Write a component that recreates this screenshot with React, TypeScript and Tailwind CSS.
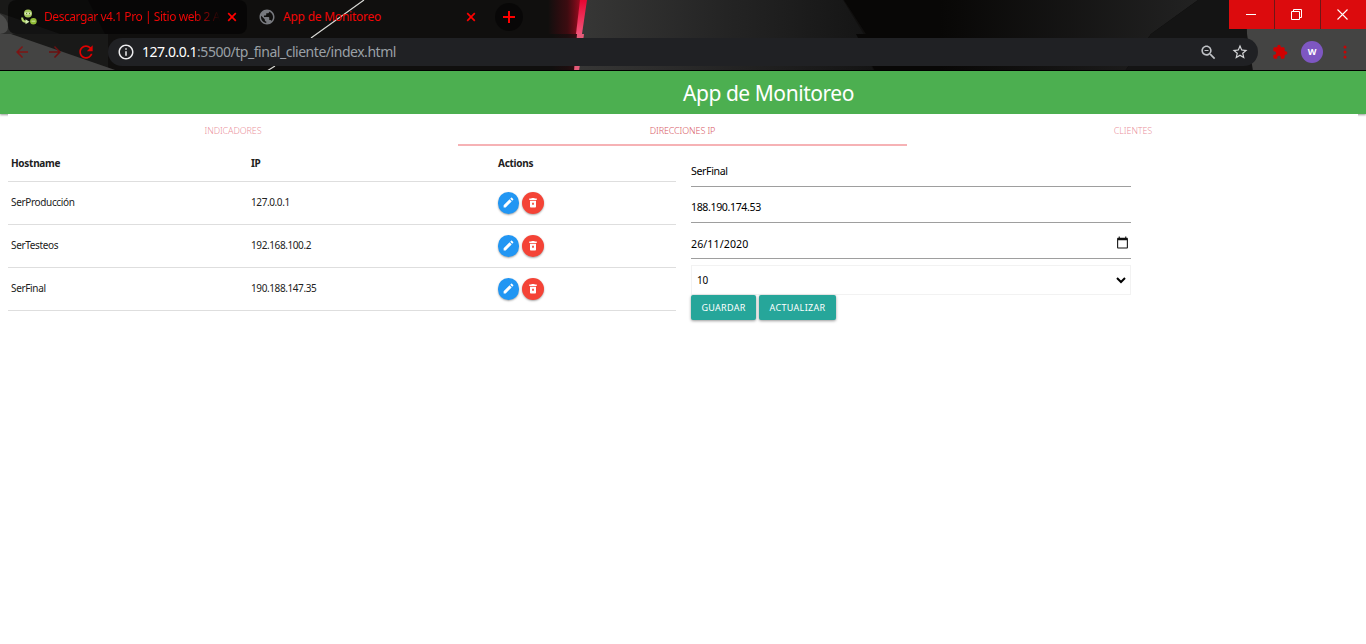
import type { ReactNode } from "react";

const servers = [
  { host: "SerProducción", ip: "127.0.0.1" },
  { host: "SerTesteos", ip: "192.168.100.2" },
  { host: "SerFinal", ip: "190.188.147.35" },
];

function Wallpaper() {
  return (
    <svg className="absolute inset-0 h-full w-full" viewBox="0 0 1366 71" preserveAspectRatio="none" aria-hidden="true">
      <defs>
        <linearGradient id="gray" x1="0" x2="1">
          <stop offset="0" stopColor="#373736" />
          <stop offset="0.5" stopColor="#242424" />
          <stop offset="1" stopColor="#141414" />
        </linearGradient>
        <linearGradient id="glow" x1="0" x2="1">
          <stop offset="0" stopColor="#990014" stopOpacity="0" />
          <stop offset="0.6" stopColor="#8c0716" stopOpacity="0.35" />
          <stop offset="1" stopColor="#b30b22" stopOpacity="0.85" />
        </linearGradient>
        <linearGradient id="beam" x1="0" x2="0" y1="0" y2="1">
          <stop offset="0" stopColor="#e80632" />
          <stop offset="1" stopColor="#f2557a" />
        </linearGradient>
        <linearGradient id="facet" x1="0" x2="1">
          <stop offset="0" stopColor="#080706" />
          <stop offset="1" stopColor="#222222" />
        </linearGradient>
      </defs>
      <rect width="1366" height="71" fill="#100f0e" />
      <path d="M0 0H88L105 34H108V71H0Z" fill="#191918" />
      <path d="M0 13L60 34H0Z" fill="#2c2c2b" />
      <path d="M0 34H11L118 71H0Z" fill="#444443" />
      <path d="M0 14Q8 18 8 27Q8 33 0 34Z" fill="#4b4b4a" />
      <path d="M364 0L311 38M275 66L267 71" stroke="#d8d8d4" strokeWidth="1.2" />
      <rect x="548" width="32" height="34" fill="url(#glow)" />
      <rect x="552" y="34" width="26" height="37" fill="url(#glow)" opacity="0.3" />
      <path d="M584 0H843L866 38H856L874 71H578Z" fill="url(#gray)" />
      <path d="M580 0H587L582 34H576Z" fill="url(#beam)" />
      <path d="M577 34H584L579 71H574Z" fill="#e45b79" />
      <path d="M844 0H1198L1125 71H875L856 34H866Z" fill="#080706" />
      <path d="M940 0H1198L1151 34L1125 71H940Z" fill="url(#facet)" />
      <path d="M1198 0H1247L1254 71H1125L1151 34Z" fill="#141414" />
      <path d="M1246 0H1366V71H1253L1247 34Z" fill="#444443" />
      <rect y="70" width="1366" height="1" fill="#000000" />
    </svg>
  );
}

function CloseMark() {
  return (
    <svg width="10" height="10" viewBox="0 0 10 10" className="shrink-0" aria-hidden="true">
      <path d="M1.2 1.2L8.8 8.8M8.8 1.2L1.2 8.8" stroke="#ff0000" strokeWidth="1.7" />
    </svg>
  );
}

function Favicon() {
  return (
    <svg width="16" height="16" viewBox="0 0 16 16" className="shrink-0" aria-hidden="true">
      <circle cx="7" cy="4.5" r="4" fill="#a5c95c" />
      <path d="M3.800 3.500H10.200V5.500H3.800Z" fill="#e4efcf" />
      <circle cx="5.6" cy="4.5" r="0.7" fill="#5f7d2b" />
      <circle cx="8.5" cy="4.5" r="0.7" fill="#5f7d2b" />
      <path d="M1.200 8.500Q1 12.500 5 12.800" stroke="#b7da6c" strokeWidth="2" fill="none" />
      <path d="M4.500 10.200L8.500 12.800L4.500 15.200Z" fill="#d2ecad" />
      <circle cx="12.4" cy="12.3" r="3.3" fill="#90bb36" />
      <path d="M10.500 11.600H14.300V12.800H10.500Z" fill="#c5df91" />
    </svg>
  );
}

function Material({ path, size, color, className }: { path: string; size: number; color: string; className?: string }) {
  return (
    <svg width={size} height={size} viewBox="0 0 24 24" fill={color} className={`shrink-0 ${className ?? ""}`} aria-hidden="true">
      <path d={path} fillRule="evenodd" />
    </svg>
  );
}

const paths = {
  globe:
    "M12 2C6.48 2 2 6.48 2 12s4.48 10 10 10 10-4.48 10-10S17.52 2 12 2zm-1 17.93c-3.95-.49-7-3.85-7-7.93 0-.62.08-1.21.21-1.79L9 15v1c0 1.1.9 2 2 2v1.93zm6.900-2.540c-.26-.81-1-1.390-1.900-1.390h-1v-3c0-.55-.45-1-1-1H8v-2h2c.55 0 1-.45 1-1V7h2c1.100 0 2-.9 2-2v-.41c2.930 1.190 5 4.060 5 7.410 0 2.080-.8 3.970-2.100 5.390z",
  back: "M20 11H7.830l5.590-5.590L12 4l-8 8 8 8 1.410-1.410L7.830 13H20v-2z",
  forward: "M12 4l-1.410 1.410L16.170 11H4v2h12.170l-5.580 5.590L12 20l8-8z",
  reload:
    "M17.650 6.350C16.200 4.900 14.210 4 12 4c-4.420 0-7.990 3.580-7.990 8s3.570 8 7.990 8c3.730 0 6.840-2.550 7.730-6h-2.080c-.82 2.330-3.040 4-5.650 4-3.310 0-6-2.690-6-6s2.690-6 6-6c1.660 0 3.140.69 4.220 1.780L13 11h7V4l-2.350 2.350z",
  info: "M11 7h2v2h-2zm0 4h2v6h-2zm1-9C6.480 2 2 6.480 2 12s4.480 10 10 10 10-4.480 10-10S17.520 2 12 2zm0 18c-4.410 0-8-3.590-8-8s3.590-8 8-8 8 3.590 8 8-3.590 8-8 8z",
  zoomOut:
    "M15.500 14h-.79l-.28-.27C15.410 12.590 16 11.110 16 9.500 16 5.910 13.090 3 9.500 3S3 5.910 3 9.500 5.910 16 9.500 16c1.610 0 3.090-.59 4.230-1.570l.27.28v.79l5 4.990L20.490 19l-4.990-5zm-6 0C7.010 14 5 11.990 5 9.500S7.010 5 9.500 5 14 7.010 14 9.500 11.990 14 9.500 14zM7 8.800h5v1.400H7z",
  star: "M22 9.240l-7.190-.62L12 2 9.190 8.630 2 9.240l5.460 4.730L5.820 21 12 17.270 18.180 21l-1.630-7.030L22 9.240zM12 15.400l-3.760 2.270 1-4.280-3.320-2.880 4.380-.38L12 6.100l1.710 4.040 4.380.38-3.320 2.880 1 4.280L12 15.400z",
  puzzle:
    "M20.500 11H19V7c0-1.100-.9-2-2-2h-4V3.500C13 2.120 11.880 1 10.500 1S8 2.120 8 3.500V5H4c-1.100 0-1.990.9-1.990 2v3.800H3.500c1.490 0 2.700 1.210 2.700 2.700s-1.210 2.700-2.700 2.700H2V20c0 1.100.9 2 2 2h3.800v-1.500c0-1.490 1.210-2.700 2.700-2.700s2.700 1.210 2.700 2.700V22H17c1.100 0 2-.9 2-2v-4h1.500c1.380 0 2.500-1.120 2.500-2.500S21.880 11 20.500 11z",
  edit: "M3 17.250V21h3.750L17.810 9.940l-3.750-3.750L3 17.250zM20.710 7.040c.39-.39.39-1.020 0-1.410l-2.340-2.340c-.39-.39-1.020-.39-1.410 0l-1.830 1.830 3.750 3.750 1.830-1.830z",
  trash:
    "M6 19c0 1.100.9 2 2 2h8c1.100 0 2-.9 2-2V7.500H6V19zM15.500 3l-1-1h-5l-1 1H4.500v3h15V3zM10.300 11.500h3.400v4h-3.400z",
  calendar: "M20 3h-1V1h-2v2H7V1H5v2H4c-1.100 0-2 .9-2 2v16c0 1.100.9 2 2 2h16c1.100 0 2-.9 2-2V5c0-1.100-.9-2-2-2zm0 18H4V8h16v13z",
};

function BrowserChrome() {
  return (
    <header className="relative h-[71px] overflow-hidden bg-black">
      <Wallpaper />
      <div className="relative flex h-[34px] items-start text-[12px] text-[#f00606]">
        <div className="ml-2 flex h-[34px] w-[239px] items-center rounded-lg bg-black/55 pl-[13px]">
          <Favicon />
          <span className="ml-[7px] w-[180px] shrink-0 whitespace-nowrap bg-linear-to-r from-[#f00606] from-83% to-[#f0060600] to-98% bg-clip-text tracking-[-0.440px] text-transparent">
            Descargar v4.1 Pro | Sitio web 2 A
          </span>
          <span className="ml-[3px] flex"><CloseMark /></span>
        </div>
        <div className="flex h-[34px] w-[248px] items-center pl-[11px]">
          <Material path={paths.globe} size={18} color="#77797e" />
          <span className="ml-[7px] w-[183px] whitespace-nowrap tracking-[-0.230px]">App de Monitoreo</span>
          <CloseMark />
        </div>
        <div className="mt-[3px] flex size-7 items-center justify-center rounded-full bg-black/50">
          <svg width="12" height="12" viewBox="0 0 12 12" aria-hidden="true">
            <path d="M6 0V12M0 6H12" stroke="#ff0000" strokeWidth="2" />
          </svg>
        </div>
        <div className="ml-auto flex h-[29px] gap-px bg-[#6e1717]">
          <div className="flex w-[45px] items-center justify-center bg-[#dc0b0d] pr-[2px]"><span className="h-px w-[10px] bg-white" /></div>
          <div className="flex w-[45px] items-center justify-center bg-[#dc0b0d] pr-[2px] pb-px">
            <svg width="11" height="11" viewBox="0 0 11 11" fill="none" stroke="#fff" aria-hidden="true">
              <path d="M.5 2.500h8v8h-8zM2.500 2.500v-2h8v8h-2" />
            </svg>
          </div>
          <div className="flex w-[45px] items-center justify-center bg-[#dc0b0d] pr-[2px] pb-px">
            <svg width="11" height="11" viewBox="0 0 11 11" aria-hidden="true">
              <path d="M.5.5l10 10M10.500.5l-10 10" stroke="#fff" strokeWidth="1.100" />
            </svg>
          </div>
        </div>
      </div>
      <div className="relative flex h-[36px] items-center">
        <Material path={paths.back} size={18} color="#7d1414" className="ml-[13px]" />
        <Material path={paths.forward} size={18} color="#6b1010" className="ml-[15px]" />
        <Material path={paths.reload} size={20} color="#e00000" className="ml-[12px]" />
        <div className="ml-[12px] flex h-7 w-[1150px] items-center rounded-full bg-[#202124] pr-[9px] pl-[9px]">
          <Material path={paths.info} size={18} color="#ececee" />
          <span className="ml-[7px] whitespace-nowrap pb-px text-[14px] tracking-[-0.470px] text-[#9aa0a6]">
            <span className="text-white">127.0.0.1</span>:5500/tp_final_cliente/index.html
          </span>
          <Material path={paths.zoomOut} size={19} color="#bfc1c5" className="ml-auto" />
          <Material path={paths.star} size={18} color="#d5d6d8" className="ml-[13px]" />
        </div>
        <Material path={paths.puzzle} size={16} color="#cf0000" className="ml-[14px]" />
        <div className="ml-[13px] flex size-[22px] items-center justify-center rounded-full bg-[#7e57c2] text-[9px] font-bold text-white">W</div>
        <svg width="4" height="16" viewBox="0 0 4 16" fill="#c40606" className="ml-[20px]" aria-hidden="true">
          <circle cx="2" cy="3" r="1.500" /><circle cx="2" cy="8" r="1.500" /><circle cx="2" cy="13" r="1.500" />
        </svg>
      </div>
    </header>
  );
}

function RoundButton({ color, children }: { color: string; children: ReactNode }) {
  return (
    <button className={`flex h-[22px] items-center justify-center rounded-full shadow-[0_1px_2px_rgba(0,0,0,0.35)] ${color}`}>
      {children}
    </button>
  );
}

function HostTable() {
  return (
    <section className="w-[668px] text-[10px] text-[#212121]">
      <div className="grid h-[36px] grid-cols-[240px_247px_1fr] items-center border-b border-[#dedede] pl-[3px] font-bold tracking-[-0.280px]">
        <span>Hostname</span><span>IP</span><span>Actions</span>
      </div>
      {servers.map((s) => (
        <div key={s.host} className="grid h-[43px] grid-cols-[240px_247px_1fr] items-center border-b border-[#dedede] pb-px pl-[3px]">
          <span className="tracking-[-0.340px]">{s.host}</span>
          <span className="tracking-[-0.400px]">{s.ip}</span>
          <span className="flex gap-[3px]">
            <RoundButton color="w-[21px] bg-[#2196f3]"><Material path={paths.edit} size={13} color="#fff" /></RoundButton>
            <RoundButton color="w-[22px] bg-[#f44336]"><Material path={paths.trash} size={12} color="#fff" /></RoundButton>
          </span>
        </div>
      ))}
    </section>
  );
}

function EditForm() {
  return (
    <section className="ml-[15px] w-[440px] text-[10.600px] tracking-[-0.380px] text-black">
      <div className="flex h-[41px] items-center border-b border-[#9e9e9e] pt-[11px]">SerFinal</div>
      <div className="flex h-[36px] items-center border-b border-[#9e9e9e] pt-[6px]">188.190.174.53</div>
      <div className="flex h-[36px] items-center justify-between border-b border-[#9e9e9e] pt-[6px] pr-[2px]">
        <span className="pt-[2px] tracking-[0.100px]">26/11/2020</span>
        <Material path={paths.calendar} size={13} color="#111" className="mb-[2px]" />
      </div>
      <div className="mt-[6px] flex h-[30px] items-center justify-between border border-[#f2f2f2] pr-[4px] pl-[5px] text-[10px] tracking-[-0.1px]">
        10
        <svg width="10" height="7" viewBox="0 0 10 7" fill="none" aria-hidden="true">
          <path d="M1 1l4 4 4-4" stroke="#000" strokeWidth="2" />
        </svg>
      </div>
      <div className="flex gap-[3px] text-[9px] tracking-[0.300px] text-white">
        <button className="h-[25px] w-[65px] rounded-[2px] bg-[#26a69a] shadow-[0_1px_3px_rgba(0,0,0,0.4)]">GUARDAR</button>
        <button className="h-[25px] w-[77px] rounded-[2px] bg-[#26a69a] shadow-[0_1px_3px_rgba(0,0,0,0.4)]">ACTUALIZAR</button>
      </div>
    </section>
  );
}

export default function App() {
  return (
    <div className="h-[644px] overflow-hidden bg-white font-['Noto_Sans','Open_Sans',sans-serif]">
      <BrowserChrome />
      <div className="flex h-[43px] items-center bg-[#4caf50] pl-[683px] text-[21px] text-white shadow-[0_1px_2px_rgba(0,0,0,0.4)]">
        <h1 className="whitespace-nowrap pt-[2px] tracking-[-0.450px]">App de Monitoreo</h1>
      </div>
      <main className="relative mx-2 bg-white">
        <nav className="grid h-[32px] grid-cols-3 text-center text-[9px] leading-[33px] font-light tracking-[-0.120px] text-[#e5737f]/80">
          <span className="h-[32px]">INDICADORES</span>
          <span className="mr-px h-[32px] border-b-2 border-[#f6b2b5] text-[#d85965]">DIRECCIONES IP</span>
          <span className="h-[32px]">CLIENTES</span>
        </nav>
        <div className="flex items-start">
          <HostTable />
          <EditForm />
        </div>
      </main>
    </div>
  );
}
